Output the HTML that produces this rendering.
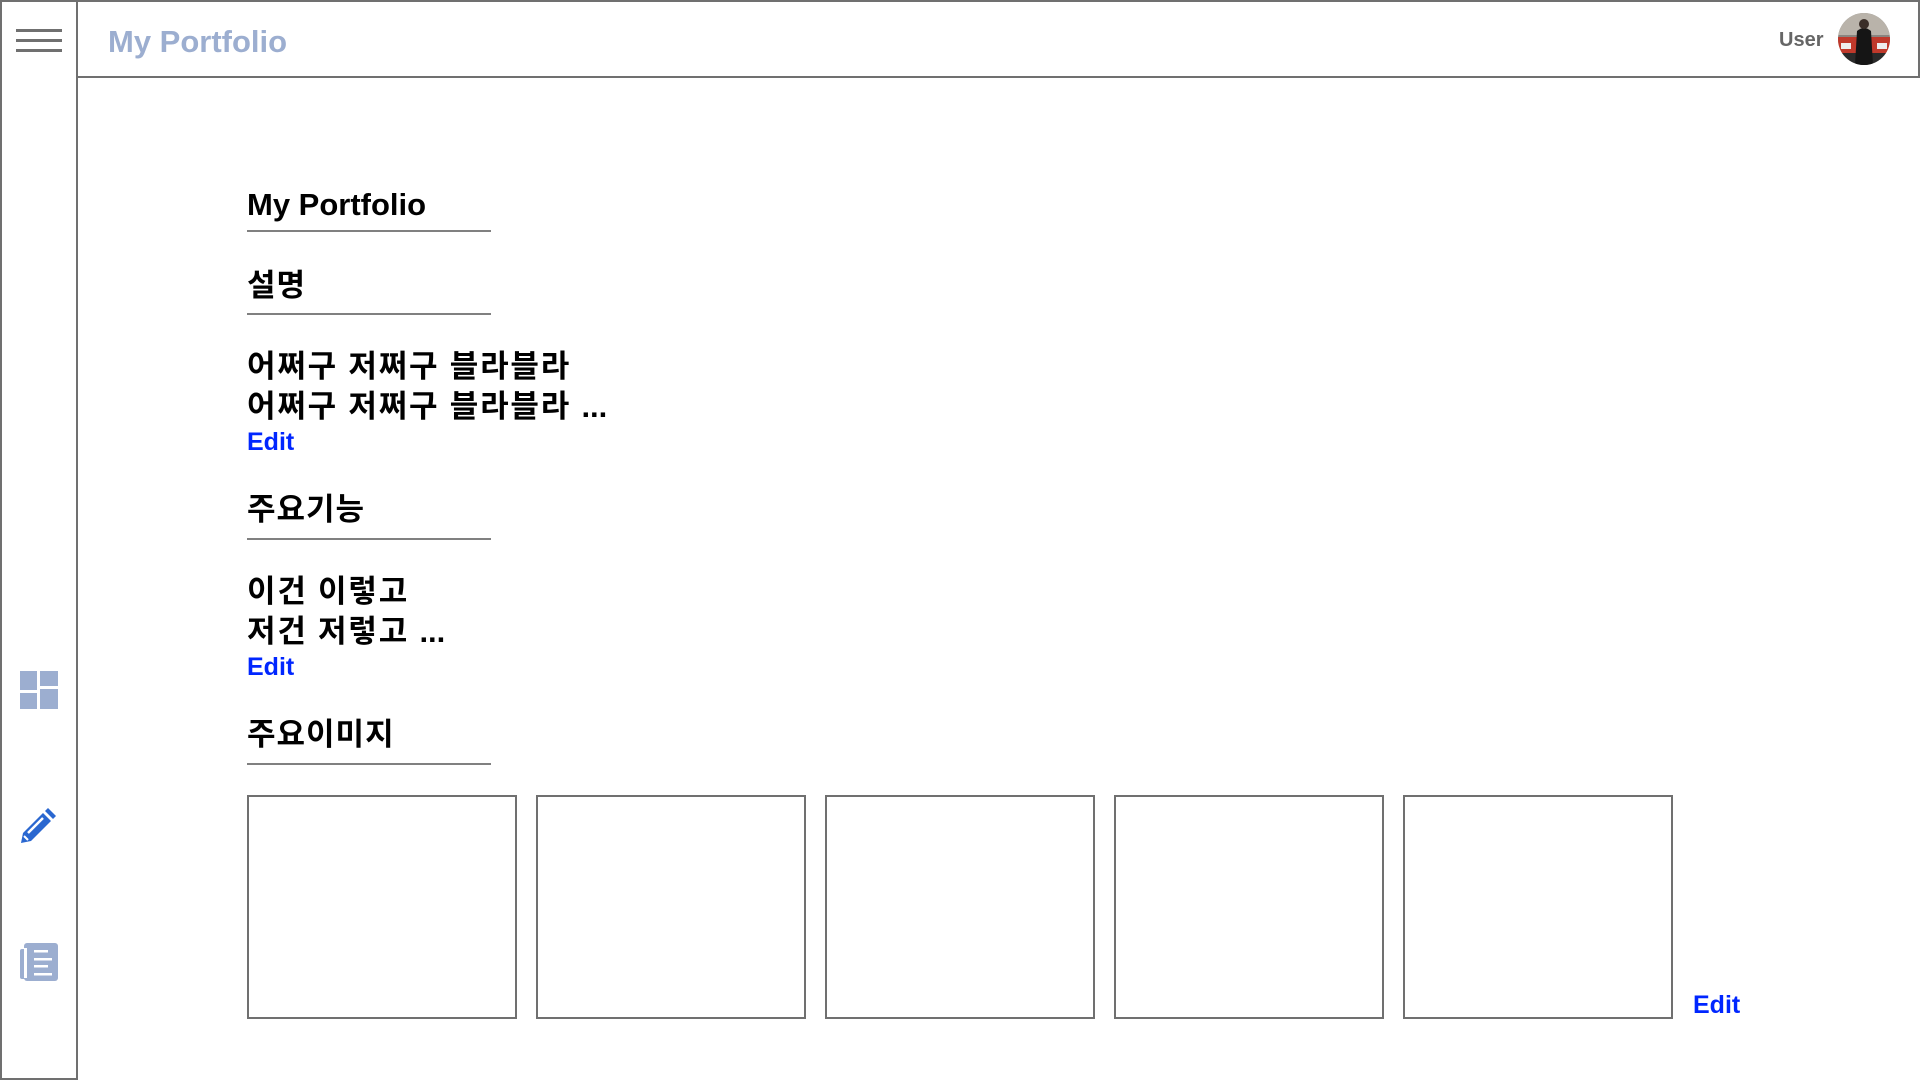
<!DOCTYPE html>
<html><head><meta charset="utf-8"><style>
*{margin:0;padding:0;box-sizing:border-box}
body{width:1920px;height:1080px;background:#fff;position:relative;overflow:hidden;font-family:"Liberation Sans","Noto Sans CJK KR",sans-serif}
.a{position:absolute;white-space:nowrap}
.side{left:0;top:0;width:78px;height:1080px;border:2px solid #707070;border-right-width:2px}
.head{left:76px;top:0;width:1844px;height:78px;border:2px solid #707070}
.ham{left:16px;width:46px;height:3px;background:#707070}
.h{font-size:31px;font-weight:bold;color:#000;left:247px;line-height:40px;letter-spacing:1px}
.t{font-size:31px;font-weight:bold;color:#000;left:247px;line-height:40px;letter-spacing:1.8px}
.line{left:247px;width:244px;height:2px;background:#808080}
.e{font-size:25px;font-weight:bold;color:#0026ff;line-height:30px}
.box{top:795px;width:270px;height:224px;border:2px solid #707070}
</style></head><body>
<div class="a side"></div>
<div class="a head"></div>
<div class="a ham" style="top:29px"></div>
<div class="a ham" style="top:39px"></div>
<div class="a ham" style="top:49px"></div>
<div class="a" style="left:108px;top:22px;font-size:31px;font-weight:bold;color:#9caed0;line-height:40px">My Portfolio</div>
<div class="a" style="left:1779px;top:27px;font-size:20px;font-weight:bold;color:#666;line-height:26px">User</div>
<svg class="a" style="left:1838px;top:13px" width="52" height="52" viewBox="0 0 52 52">
<defs><clipPath id="c"><circle cx="26" cy="26" r="26"/></clipPath></defs>
<g clip-path="url(#c)">
<rect width="52" height="52" fill="#8a8580"/>
<rect y="0" width="52" height="22" fill="#b9b3aa"/>
<rect x="0" y="24" width="52" height="16" fill="#c0392b"/>
<rect x="3" y="30" width="10" height="6" fill="#eee"/><rect x="39" y="30" width="10" height="6" fill="#eee"/>
<rect x="0" y="40" width="52" height="12" fill="#2a2a2a"/>
<path d="M19 18 Q26 12 33 18 L35 52 L17 52 Z" fill="#151515"/>
<circle cx="26" cy="11" r="5" fill="#3a2e28"/>
</g></svg>

<div class="a h" style="top:185px;letter-spacing:0">My Portfolio</div>
<div class="a line" style="top:230px"></div>
<div class="a h" style="top:266px">설명</div>
<div class="a line" style="top:313px"></div>
<div class="a t" style="top:347px">어쩌구 저쩌구 블라블라</div>
<div class="a t" style="top:387px">어쩌구 저쩌구 블라블라 <span style="letter-spacing:0">...</span></div>
<div class="a e" style="left:247px;top:427px">Edit</div>
<div class="a h" style="top:490px">주요기능</div>
<div class="a line" style="top:538px"></div>
<div class="a t" style="top:572px">이건 이렇고</div>
<div class="a t" style="top:612px">저건 저렇고 <span style="letter-spacing:0">...</span></div>
<div class="a e" style="left:247px;top:652px">Edit</div>
<div class="a h" style="top:715px">주요이미지</div>
<div class="a line" style="top:763px"></div>
<div class="a box" style="left:247px"></div>
<div class="a box" style="left:536px"></div>
<div class="a box" style="left:825px"></div>
<div class="a box" style="left:1114px"></div>
<div class="a box" style="left:1403px"></div>
<div class="a e" style="left:1693px;top:990px">Edit</div>

<svg class="a" style="left:20px;top:671px" width="38" height="38" viewBox="0 0 38 38" fill="#9caed0">
<rect x="0" y="0" width="17" height="19"/><rect x="20" y="0" width="18" height="15"/>
<rect x="0" y="22" width="17" height="16"/><rect x="20" y="18" width="18" height="20"/></svg>
<svg class="a" style="left:20px;top:806px" width="38" height="38" viewBox="0 0 38 38">
<path d="M28 2 L36 10 L33 13 L25 5 Z" fill="#2a67d0"/>
<path d="M23 7 L31 15 L11 35 L1 37 L3 27 Z" fill="#2a67d0"/>
<path d="M23 12 L8 27" stroke="#fff" stroke-width="2.5"/>
<path d="M4 30 L8 34" stroke="#fff" stroke-width="2"/></svg>
<svg class="a" style="left:20px;top:943px" width="38" height="38" viewBox="0 0 38 38" fill="#9caed0">
<rect x="4" y="0" width="34" height="38" rx="3"/><rect x="0" y="6" width="6" height="30" rx="2"/>
<rect x="4" y="5" width="3" height="30" fill="#fff"/>
<rect x="14" y="7" width="14" height="2.5" fill="#fff"/><rect x="14" y="15" width="18" height="2.5" fill="#fff"/>
<rect x="14" y="22" width="14" height="2.5" fill="#fff"/><rect x="14" y="30" width="18" height="2.5" fill="#fff"/></svg>
</body></html>
